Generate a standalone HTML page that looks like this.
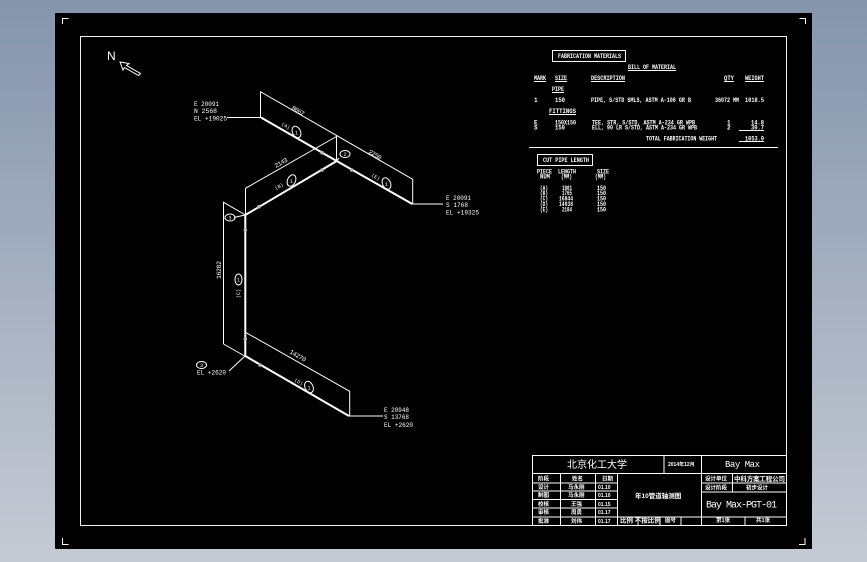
<!DOCTYPE html>
<html><head><meta charset="utf-8"><style>
html,body{margin:0;padding:0;width:867px;height:562px;overflow:hidden;background:linear-gradient(#8495ac,#c6cad4)}
svg{position:absolute;left:0;top:0}
text{font-family:"Liberation Mono","Noto Sans CJK SC",monospace;fill:#fff;font-size:6.5px}
.c{font-family:"Liberation Sans","Noto Sans CJK SC",sans-serif;font-size:6.5px;font-weight:bold}
.b{font-weight:bold;font-size:6px}
</style></head><body>
<svg width="867" height="562" viewBox="0 0 867 562" shape-rendering="crispEdges">
<rect x="55" y="13" width="757" height="536" fill="#000"/>
<g fill="none" stroke="#fff" stroke-width="1">
<path d="M62.5 24V18.5H68.500M805.5 18.500H799.5M805.5 18.500V24M62.5 538V544.5H68.5M805 538V544.5H799"/>
<rect x="80.5" y="36.5" width="706" height="489" stroke="#f2f2e8"/>
</g>
<g fill="none" stroke="#fff" stroke-width="1" shape-rendering="auto">
<path d="M120 62L129 63.5L126.5 65.5L140.5 73.5L138.5 75.5L124.5 67.5L123 70Z"/>
<path d="M260.5 117V91.7L412.7 179.3V204M336.5 161V135.7M245.5 215V188.3L336.5 136.5M223.5 344V202.3L245.5 215M223.5 344L245.5 356.5M245.5 332.3L349.7 391.3V416"/>
<path d="M227 117.5H261M412 204H443M349 416H383M229 371L245 356M234 217.5L245 215M339 158L336.5 161"/>
<ellipse cx="230" cy="217.5" rx="5" ry="3.5"/><ellipse cx="345" cy="154" rx="5" ry="3.5"/>
<ellipse cx="201.5" cy="365" rx="5" ry="3.5"/>
<ellipse cx="296.500" cy="132" rx="4" ry="6" transform="rotate(-25 296.500 132)"/>
<ellipse cx="291.500" cy="180.500" rx="4" ry="6" transform="rotate(25 291.500 180.500)"/>
<ellipse cx="386.500" cy="183.500" rx="4" ry="6" transform="rotate(-25 386.500 183.500)"/>
<ellipse cx="238.500" cy="279.500" rx="3.500" ry="5.500"/>
<ellipse cx="309" cy="387" rx="4" ry="6" transform="rotate(-25 309 387)"/>
</g>
<g fill="none" stroke="#fff" stroke-width="2" shape-rendering="auto">
<path d="M261 117.500L336.700 161L412.300 204M336.700 161L245.300 215V356L349 416"/>
</g>
<g fill="#bbb" shape-rendering="auto">
<circle cx="322" cy="152.700" r="1.800"/><circle cx="351.700" cy="170" r="1.800"/><circle cx="322" cy="170" r="1.800"/><circle cx="259" cy="206.700" r="1.800"/><circle cx="245.300" cy="230" r="1.800"/><circle cx="245.300" cy="339" r="1.800"/><circle cx="260" cy="365" r="1.800"/>
</g>
<g fill="none" stroke="#fff" stroke-width="1">
<rect x="552.500" y="50.500" width="73" height="11"/>
<rect x="537.500" y="154.500" width="55" height="11"/>
<path d="M529 147.500H778M739 130.500H764M739 141.500H764"/>
<path d="M628 70.500H676M534 81.500H546M555 81.500H567M591 81.500H625M724 81.500H734M745 81.500H764M552 92.500H564M549 114.500H576"/>
<rect x="532.500" y="455.500" width="254" height="70"/>
<path d="M532.500 473.500H786.500M532.500 483H617.500M532.500 491H617.500M532.500 499.500H617.500M532.500 508H617.500M532.500 517H617.500M617.500 517H786M701.500 483H786M701.500 492H786"/>
<path d="M560.500 474V525M595.500 474V525M617.500 474V525M664 455V474M701.500 455V525M732.500 474V492M638 517V525M660 517V525M681 517V525M745 517V525"/>
</g>
<text x="107" y="60" style="font-size:12px;font-family:'Liberation Sans'">N</text>
<g>
<text x="194" y="106" textLength="25" lengthAdjust="spacingAndGlyphs">E 20091</text>
<text x="194" y="113" textLength="23" lengthAdjust="spacingAndGlyphs">N 2568</text>
<text x="194" y="120.500" textLength="33" lengthAdjust="spacingAndGlyphs">EL +19025</text>
<text x="446" y="200" textLength="25" lengthAdjust="spacingAndGlyphs">E 20091</text>
<text x="446" y="207" textLength="22" lengthAdjust="spacingAndGlyphs">S 1768</text>
<text x="446" y="214.500" textLength="33" lengthAdjust="spacingAndGlyphs">EL +19325</text>
<text x="384" y="412" textLength="25" lengthAdjust="spacingAndGlyphs">E 20948</text>
<text x="384" y="419" textLength="25" lengthAdjust="spacingAndGlyphs">S 13768</text>
<text x="384" y="427" textLength="29" lengthAdjust="spacingAndGlyphs">EL +2620</text>
<text x="197" y="374.500" textLength="29" lengthAdjust="spacingAndGlyphs">EL +2620</text>
<text transform="translate(291 109) rotate(30)" textLength="14">8067</text>
<text transform="translate(368 153) rotate(30)" textLength="14">2250</text>
<text transform="translate(276 168) rotate(-30)" textLength="14">2143</text>
<text transform="translate(221 279) rotate(-90)" textLength="18">16282</text>
<text transform="translate(289 353) rotate(30)" textLength="18">14270</text>
<text transform="translate(281 125) rotate(30)" style="font-size:5px">(A)</text>
<text transform="translate(276 190) rotate(-30)" style="font-size:5px">(B)</text>
<text transform="translate(371 176) rotate(30)" style="font-size:5px">(E)</text>
<text transform="translate(240 298) rotate(-90)" style="font-size:5px">(C)</text>
<text transform="translate(294 381) rotate(30)" style="font-size:5px">(D)</text>
<text x="295" y="134.500" style="font-size:5px">1</text><text x="290" y="183" style="font-size:5px">1</text>
<text x="385" y="186" style="font-size:5px">1</text><text x="237" y="281.500" style="font-size:5px">1</text>
<text x="307.500" y="389.500" style="font-size:5px">1</text><text x="228.500" y="219.500" style="font-size:5px">3</text>
<text x="343.500" y="156" style="font-size:5px">2</text><text x="200" y="367" style="font-size:5px">3</text>
</g>
<g class="b">
<text class="b" x="558" y="58" textLength="63" lengthAdjust="spacingAndGlyphs">FABRICATION MATERIALS</text>
<text class="b" x="628" y="69" textLength="48" lengthAdjust="spacingAndGlyphs">BILL OF MATERIAL</text>
<text class="b" x="534" y="80" textLength="12" lengthAdjust="spacingAndGlyphs">MARK</text>
<text class="b" x="555" y="80" textLength="12" lengthAdjust="spacingAndGlyphs">SIZE</text>
<text class="b" x="591" y="80" textLength="34" lengthAdjust="spacingAndGlyphs">DESCRIPTION</text>
<text class="b" x="724" y="80" textLength="10" lengthAdjust="spacingAndGlyphs">QTY</text>
<text class="b" x="745" y="80" textLength="19" lengthAdjust="spacingAndGlyphs">WEIGHT</text>
<text class="b" x="552" y="91" textLength="12" lengthAdjust="spacingAndGlyphs">PIPE</text>
<text class="b" x="534" y="102">1</text>
<text class="b" x="555" y="102" textLength="10" lengthAdjust="spacingAndGlyphs">150</text>
<text class="b" x="591" y="102" textLength="100" lengthAdjust="spacingAndGlyphs">PIPE, S/STD SMLS, ASTM A-106 GR B</text>
<text class="b" x="715" y="102" textLength="24" lengthAdjust="spacingAndGlyphs">36072 MM</text>
<text class="b" x="745" y="102" textLength="19" lengthAdjust="spacingAndGlyphs">1018.5</text>
<text class="b" x="549" y="113" textLength="27" lengthAdjust="spacingAndGlyphs">FITTINGS</text>
<text class="b" x="534" y="124.500">E</text>
<text class="b" x="555" y="124.500" textLength="21" lengthAdjust="spacingAndGlyphs">150X150</text>
<text class="b" x="592" y="124.500" textLength="103" lengthAdjust="spacingAndGlyphs">TEE, STR, S/STD, ASTM A-234 GR WPB</text>
<text class="b" x="727" y="124.500">1</text>
<text class="b" x="751" y="124.500" textLength="13" lengthAdjust="spacingAndGlyphs">14.8</text>
<text class="b" x="534" y="129.500">S</text>
<text class="b" x="555" y="129.500" textLength="10" lengthAdjust="spacingAndGlyphs">150</text>
<text class="b" x="592" y="129.500" textLength="105" lengthAdjust="spacingAndGlyphs">ELL, 90 LR S/STD, ASTM A-234 GR WPB</text>
<text class="b" x="727" y="129.500">2</text>
<text class="b" x="751" y="129.500" textLength="13" lengthAdjust="spacingAndGlyphs">30.7</text>
<text class="b" x="646" y="140.500" textLength="71" lengthAdjust="spacingAndGlyphs">TOTAL FABRICATION WEIGHT</text>
<text class="b" x="745" y="140.500" textLength="19" lengthAdjust="spacingAndGlyphs">1053.9</text>
<text class="b" x="543" y="162" textLength="46" lengthAdjust="spacingAndGlyphs">CUT PIPE LENGTH</text>
<text class="b" x="537" y="173.500" textLength="15" lengthAdjust="spacingAndGlyphs">PIECE</text>
<text class="b" x="558" y="173.500" textLength="18" lengthAdjust="spacingAndGlyphs">LENGTH</text>
<text class="b" x="597" y="173.500" textLength="12" lengthAdjust="spacingAndGlyphs">SIZE</text>
<text class="b" x="540" y="178.500" textLength="10" lengthAdjust="spacingAndGlyphs">NUM</text>
<text class="b" x="561" y="178.500" textLength="11" lengthAdjust="spacingAndGlyphs">(MM)</text>
<text class="b" x="595" y="178.500" textLength="11" lengthAdjust="spacingAndGlyphs">(MM)</text>
<text class="b" x="540" y="190" textLength="8" lengthAdjust="spacingAndGlyphs">(A)</text><text class="b" x="562" y="190" textLength="10" lengthAdjust="spacingAndGlyphs">1981</text><text class="b" x="597" y="190" textLength="9" lengthAdjust="spacingAndGlyphs">150</text>
<text class="b" x="540" y="195" textLength="8" lengthAdjust="spacingAndGlyphs">(B)</text><text class="b" x="562" y="195" textLength="10" lengthAdjust="spacingAndGlyphs">1765</text><text class="b" x="597" y="195" textLength="9" lengthAdjust="spacingAndGlyphs">150</text>
<text class="b" x="540" y="200.500" textLength="8" lengthAdjust="spacingAndGlyphs">(C)</text><text class="b" x="559" y="200.500" textLength="14" lengthAdjust="spacingAndGlyphs">16844</text><text class="b" x="597" y="200.500" textLength="9" lengthAdjust="spacingAndGlyphs">150</text>
<text class="b" x="540" y="206" textLength="8" lengthAdjust="spacingAndGlyphs">(D)</text><text class="b" x="559" y="206" textLength="14" lengthAdjust="spacingAndGlyphs">14038</text><text class="b" x="597" y="206" textLength="9" lengthAdjust="spacingAndGlyphs">150</text>
<text class="b" x="540" y="211.500" textLength="8" lengthAdjust="spacingAndGlyphs">(E)</text><text class="b" x="562" y="211.500" textLength="10" lengthAdjust="spacingAndGlyphs">2184</text><text class="b" x="597" y="211.500" textLength="9" lengthAdjust="spacingAndGlyphs">150</text>
</g>
<g>
<text class="c" x="567" y="468" style="font-size:10px;font-weight:normal">北京化工大学</text>
<text class="c" x="668" y="466" style="font-size:5px">2014年12月</text>
<text x="725" y="467" style="font-size:9px" textLength="35">Bay Max</text>
<text x="706" y="507.500" style="font-size:10px" textLength="71">Bay Max-PGT-01</text>
<text class="c" x="538" y="480.500" style="font-size:5.500px">阶段</text><text class="c" x="572" y="480.500" style="font-size:5.500px">姓名</text><text class="c" x="602" y="480.500" style="font-size:5.500px">日期</text>
<text class="c" x="538" y="489" style="font-size:5.500px">设计</text><text class="c" x="568" y="489" style="font-size:5.500px">马永刚</text><text class="c" x="598" y="489" style="font-size:5px">01.10</text>
<text class="c" x="538" y="497" style="font-size:5.500px">制图</text><text class="c" x="568" y="497" style="font-size:5.500px">马永刚</text><text class="c" x="598" y="497" style="font-size:5px">01.10</text>
<text class="c" x="538" y="506" style="font-size:5.500px">校核</text><text class="c" x="571" y="506" style="font-size:5.500px">王强</text><text class="c" x="598" y="506" style="font-size:5px">01.15</text>
<text class="c" x="538" y="514" style="font-size:5.500px">审核</text><text class="c" x="571" y="514" style="font-size:5.500px">周勇</text><text class="c" x="598" y="514" style="font-size:5px">01.17</text>
<text class="c" x="538" y="523" style="font-size:5.500px">批准</text><text class="c" x="571" y="523" style="font-size:5.500px">刘伟</text><text class="c" x="598" y="523" style="font-size:5px">01.17</text>
<text class="c" x="635" y="498" style="font-size:6.500px">年10管道轴测图</text>
<text class="c" x="620" y="522.500" style="font-size:6.500px">比例 不按比例</text>
<text class="c" x="665" y="522" style="font-size:5.500px">图号</text>
<text class="c" x="705" y="480.500" style="font-size:5.500px">设计单位</text>
<text class="c" x="734" y="481" style="font-size:6.500px" textLength="51">中科方案工程公司</text>
<text class="c" x="705" y="489.500" style="font-size:5.500px">设计阶段</text><text class="c" x="746" y="489.500" style="font-size:5.500px">初步设计</text>
<text class="c" x="716" y="522" style="font-size:5.500px">第1张</text><text class="c" x="756" y="522" style="font-size:5.500px">共1张</text>
</g>
</svg>
</body></html>
